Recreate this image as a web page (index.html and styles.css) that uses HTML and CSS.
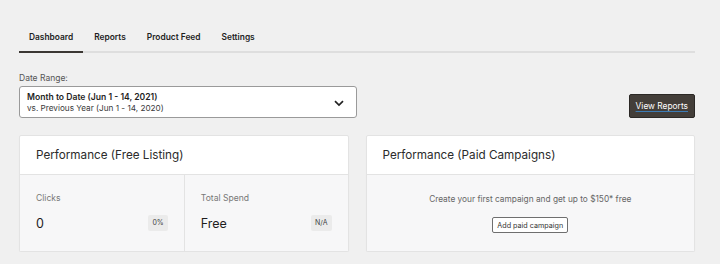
FILE: index.html
```html
<!DOCTYPE html>
<html lang="en">
<head>
<meta charset="utf-8">
<title>Dashboard</title>
<link rel="stylesheet" href="styles.css">
</head>
<body>
<div class="page">
  <nav class="tabs">
    <a class="tab active">Dashboard</a>
    <a class="tab">Reports</a>
    <a class="tab">Product Feed</a>
    <a class="tab">Settings</a>
  </nav>

  <div class="filter-row">
    <div class="date-range">
      <label class="field-label">Date Range:</label>
      <div class="select">
        <div class="select-text">
          <div class="select-main">Month to Date (Jun 1 - 14, 2021)</div>
          <div class="select-sub">vs. Previous Year (Jun 1 - 14, 2020)</div>
        </div>
        <svg class="chevron" width="10" height="7" viewBox="0 0 10 7"><path d="M1 1.2 L5 5 L9 1.2" fill="none" stroke="#222" stroke-width="1.7"/></svg>
      </div>
    </div>
    <button class="btn-dark"><span>View Reports</span></button>
  </div>

  <div class="cards">
    <section class="card">
      <header class="card-head">Performance (Free Listing)</header>
      <div class="card-body metrics">
        <div class="metric">
          <div class="metric-label">Clicks</div>
          <div class="metric-row">
            <span class="metric-value">0</span>
            <span class="badge">0%</span>
          </div>
        </div>
        <div class="metric">
          <div class="metric-label">Total Spend</div>
          <div class="metric-row">
            <span class="metric-value">Free</span>
            <span class="badge">N/A</span>
          </div>
        </div>
      </div>
    </section>
    <section class="card">
      <header class="card-head">Performance (Paid Campaigns)</header>
      <div class="card-body promo">
        <p class="promo-text">Create your first campaign and get up to $150* free</p>
        <button class="btn-outline">Add paid campaign</button>
      </div>
    </section>
  </div>
</div>
</body>
</html>
```

FILE: styles.css
```css
html, body {
  margin: 0;
  padding: 0;
  background: #f0f0f0;
  font-family: Inter, "Noto Sans", "Liberation Sans", sans-serif;
  color: #1e1e1e;
}

.page {
  padding: 25px 25px 0 19px;
}

.tabs {
  display: flex;
  border-bottom: 2px solid #dedede;
}

.tab {
  padding: 6px 10px 7px;
  font-size: 8.4px;
  line-height: 13px;
  font-weight: 600;
  color: #1e1e1e;
  margin-right: 1px;
}

.tab.active {
  border-bottom: 2px solid #3b3733;
  margin-bottom: -2px;
}

.filter-row {
  display: flex;
  justify-content: space-between;
  align-items: flex-end;
  margin-top: 19px;
}

.field-label {
  display: block;
  font-size: 8.5px;
  line-height: 12px;
  color: #555;
  margin-bottom: 2px;
}

.select {
  width: 317px;
  display: flex;
  align-items: center;
  justify-content: space-between;
  background: #fff;
  border: 1px solid #9a9a9a;
  border-radius: 3px;
  padding: 5px 12px 3px 7px;
}

.select-main {
  font-size: 8.6px;
  line-height: 11px;
  font-weight: 600;
  color: #1e1e1e;
}

.select-sub {
  font-size: 8.2px;
  line-height: 11px;
  color: #3a3a3a;
}

.chevron {
  display: block;
}

.btn-dark {
  background: #433e39;
  border: 1px solid #2b2825;
  border-radius: 2px;
  color: #fff;
  font-family: inherit;
  font-size: 8.4px;
  height: 24px;
  padding: 0 6px;
  margin-bottom: 0;
}

.btn-dark span {
  text-decoration: underline;
  text-decoration-color: #3c7bb5;
  text-underline-offset: 2px;
}

.cards {
  display: grid;
  grid-template-columns: 1fr 1fr;
  gap: 17px;
  margin-top: 17px;
}

.card {
  background: #fff;
  border: 1px solid #e3e3e3;
  border-radius: 2px;
  box-shadow: 0 1px 1px rgba(0,0,0,0.04);
}

.card-head {
  height: 38px;
  display: flex;
  align-items: center;
  padding-left: 16px;
  font-size: 11.7px;
  color: #2b2b2b;
  border-bottom: 1px solid #e3e3e3;
}

.card-body {
  background: #f7f7f8;
  height: 76px;
}

.metrics {
  display: grid;
  grid-template-columns: 1fr 1fr;
}

.metric {
  padding: 17px 16px 0 16px;
}

.metric + .metric {
  border-left: 1px solid #e3e3e3;
}

.metric-label {
  font-size: 8.6px;
  line-height: 12px;
  color: #777;
}

.metric-row {
  display: flex;
  align-items: center;
  justify-content: space-between;
  margin-top: 10px;
  height: 18px;
}

.metric-value {
  font-size: 12.5px;
  color: #1e1e1e;
}

.badge {
  background: #ebebeb;
  border-radius: 2px;
  font-size: 7px;
  color: #444;
  padding: 4px 4px;
  line-height: 8px;
}

.promo {
  display: flex;
  flex-direction: column;
  align-items: center;
}

.promo-text {
  margin: 18px 0 0;
  font-size: 8.3px;
  line-height: 12px;
  color: #666;
}

.btn-outline {
  margin-top: 12px;
  background: #fff;
  border: 1px solid #6f6f6f;
  border-radius: 2px;
  font-family: inherit;
  font-size: 7.2px;
  color: #333;
  height: 16px;
  padding: 0 4px;
}
```
